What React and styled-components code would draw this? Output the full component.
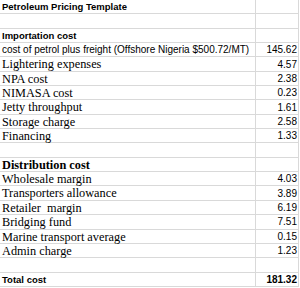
import React from "react";
import styled, { createGlobalStyle } from "styled-components";

const Global = createGlobalStyle`
  html, body { margin: 0; padding: 0; background: #fff; }
  body { width: 300px; height: 288px; overflow: hidden; }
`;

const Sheet = styled.div`
  display: grid;
  grid-template-columns: 256px 43px;
  grid-auto-rows: 14.35px;
  width: 299px;
  color: #000;
`;

const fonts = {
  sans: `"Liberation Sans", Arial, sans-serif`,
  serif: `"Liberation Serif", "Times New Roman", serif`,
};

const Cell = styled.div`
  box-sizing: border-box;
  border-right: 1px solid #d9d9d9;
  border-bottom: 1px solid #d9d9d9;
  display: flex;
  align-items: center;
  white-space: pre;
  padding: 0 2px;
  padding-top: 1px;
  font-family: ${(p) => fonts[p.$font || "sans"]};
  font-size: ${(p) => p.$size || 10}px;
  font-weight: ${(p) => (p.$bold ? 700 : 400)};
  line-height: 1;
`;

const NumCell = styled(Cell)`
  justify-content: flex-end;
  padding-right: 1px;
  font-family: ${fonts.sans};
  font-size: 10px;
`;

const rows = [
  { label: "Petroleum Pricing Template", font: "sans", size: 9.5, bold: true },
  { label: "" },
  { label: "Importation cost", font: "sans", size: 9.5, bold: true },
  { label: "cost of petrol plus freight (Offshore Nigeria $500.72/MT)", font: "sans", size: 10, value: "145.62" },
  { label: "Lightering expenses", font: "serif", size: 12.3, value: "4.57" },
  { label: "NPA cost", font: "serif", size: 12.3, value: "2.38" },
  { label: "NIMASA cost", font: "serif", size: 12.3, value: "0.23" },
  { label: "Jetty throughput", font: "serif", size: 12.3, value: "1.61" },
  { label: "Storage charge", font: "serif", size: 12.3, value: "2.58" },
  { label: "Financing", font: "serif", size: 12.3, value: "1.33" },
  { label: "" },
  { label: "Distribution cost", font: "serif", size: 12.3, bold: true },
  { label: "Wholesale margin", font: "serif", size: 12.3, value: "4.03" },
  { label: "Transporters allowance", font: "serif", size: 12.3, value: "3.89" },
  { label: "Retailer  margin", font: "serif", size: 12.3, value: "6.19" },
  { label: "Bridging fund", font: "serif", size: 12.3, value: "7.51" },
  { label: "Marine transport average", font: "serif", size: 12.3, value: "0.15" },
  { label: "Admin charge", font: "serif", size: 12.3, value: "1.23" },
  { label: "" },
  { label: "Total cost", font: "sans", size: 9.5, bold: true, value: "181.32", valueBold: true },
];

export default function App() {
  return (
    <>
      <Global />
      <Sheet>
        {rows.map((r, i) => (
          <React.Fragment key={i}>
            <Cell $font={r.font} $size={r.size} $bold={r.bold}>
              {r.label}
            </Cell>
            <NumCell $bold={r.valueBold}>{r.value || ""}</NumCell>
          </React.Fragment>
        ))}
      </Sheet>
    </>
  );
}
